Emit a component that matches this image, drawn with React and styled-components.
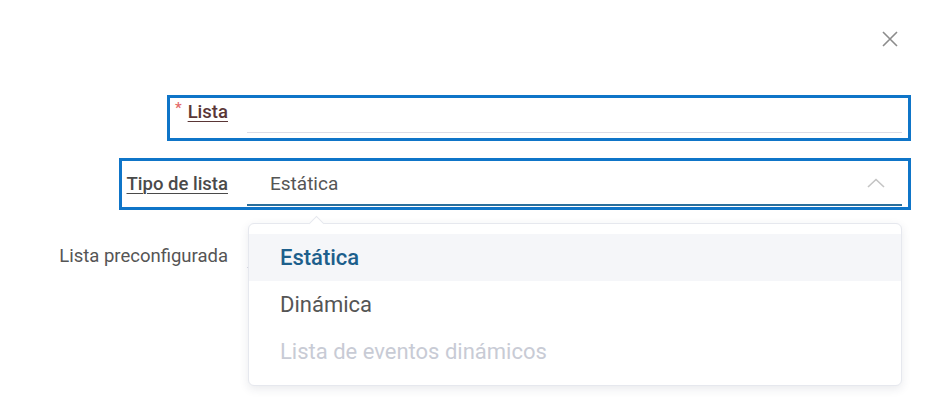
import React from "react";
import styled, { createGlobalStyle } from "styled-components";

const GlobalStyle = createGlobalStyle`
  body {
    margin: 0;
    background: #ffffff;
    font-family: Roboto, "Liberation Sans", sans-serif;
  }
`;

const Page = styled.div`
  width: 931px;
  height: 413px;
  position: relative;
  overflow: hidden;
  background: #fff;
`;

const Header = styled.div`
  display: flex;
  justify-content: flex-end;
  padding: 30px 32px 0 0;
  height: 65px;
  box-sizing: border-box;
`;

const CloseButton = styled.button`
  border: none;
  background: none;
  padding: 0;
  width: 18px;
  height: 18px;
  display: flex;
  align-items: center;
  justify-content: center;
  cursor: pointer;
`;

const Form = styled.div`
  width: 911px;
  display: flex;
  flex-direction: column;
`;

const Row = styled.div`
  display: flex;
  justify-content: flex-end;
  margin-top: ${(p) => p.gap || 0}px;
`;

const Frame = styled.div`
  display: flex;
  align-items: ${(p) => (p.top ? "flex-start" : "center")};
  border: 3px solid ${(p) => (p.active ? "#0f75c8" : "transparent")};
  padding: 0 6px 0 5px;
  height: ${(p) => p.h}px;
  box-sizing: border-box;
  position: relative;
`;

const Label = styled.span`
  display: flex;
  align-items: center;
  gap: 6px;
  margin-right: 19px;
  margin-top: ${(p) => p.offset || 0}px;
  font-size: 18.5px;
  font-weight: ${(p) => (p.strong ? 500 : 400)};
  color: ${(p) => p.color || "#555"};
  white-space: nowrap;
`;

const LabelText = styled.span`
  text-decoration: underline;
  text-underline-offset: 3px;
  text-decoration-thickness: 1px;
`;

const Star = styled.span`
  color: #e46a6a;
  font-size: 15px;
  margin-top: -8px;
`;

const TextField = styled.div`
  width: 655px;
  height: 34px;
  align-self: flex-start;
  border-bottom: 1px solid #dcdce6;
`;

const SelectField = styled.div`
  width: 655px;
  height: 44px;
  align-self: flex-start;
  margin-top: 1px;
  box-sizing: border-box;
  border-bottom: 2px solid #2a6f9c;
  display: flex;
  align-items: center;
  justify-content: space-between;
  padding: 0 17px 0 23px;
  font-size: 19px;
  color: #555;
  position: relative;
`;

const Menu = styled.div`
  position: absolute;
  left: 1px;
  top: 61px;
  width: 654px;
  box-sizing: border-box;
  padding: 10px 0;
  background: #fff;
  border: 1px solid #e6e8ee;
  border-radius: 6px;
  box-shadow: 0 3px 10px rgba(40, 50, 80, 0.1);
  z-index: 5;
`;

const Notch = styled.div`
  position: absolute;
  top: -6px;
  left: 62px;
  width: 10px;
  height: 10px;
  background: #fff;
  border-left: 1px solid #e6e8ee;
  border-top: 1px solid #e6e8ee;
  transform: rotate(45deg);
`;

const Option = styled.div`
  height: 47px;
  display: flex;
  align-items: center;
  padding-left: 31px;
  font-size: 22px;
  font-weight: ${(p) => (p.selected ? 500 : 400)};
  color: ${(p) => (p.selected ? "#1d5f8c" : p.disabled ? "#c8cbd5" : "#555")};
  background: ${(p) => (p.selected ? "#f5f6f9" : "transparent")};
`;

const options = [
  { text: "Estática", selected: true },
  { text: "Dinámica" },
  { text: "Lista de eventos dinámicos", disabled: true },
];

export default function App() {
  return (
    <Page>
      <GlobalStyle />
      <Header>
        <CloseButton aria-label="Cerrar">
          <svg width="16" height="16" viewBox="0 0 16 16">
            <path d="M1 1L15 15M15 1L1 15" stroke="#8c8c8c" strokeWidth="1.6" />
          </svg>
        </CloseButton>
      </Header>
      <Form>
        <Row gap={30}>
          <Frame active h={46} top>
            <Label strong color="#5a3636" offset={3}>
              <Star>*</Star>
              <LabelText>Lista</LabelText>
            </Label>
            <TextField />
          </Frame>
        </Row>
        <Row gap={17}>
          <Frame active h={52}>
            <Label strong color="#4a4a4a">
              <LabelText>Tipo de lista</LabelText>
            </Label>
            <SelectField>
              <span>Estática</span>
              <svg width="18" height="10" viewBox="0 0 18 10">
                <path d="M1 9L9 1.5L17 9" stroke="#c4c4c4" strokeWidth="1.6" fill="none" />
              </svg>
              <Menu>
                <Notch />
                {options.map((o) => (
                  <Option key={o.text} selected={o.selected} disabled={o.disabled}>
                    {o.text}
                  </Option>
                ))}
              </Menu>
            </SelectField>
          </Frame>
        </Row>
        <Row gap={20}>
          <Frame h={52}>
            <Label>Lista preconfigurada</Label>
            <TextField />
          </Frame>
        </Row>
      </Form>
    </Page>
  );
}
